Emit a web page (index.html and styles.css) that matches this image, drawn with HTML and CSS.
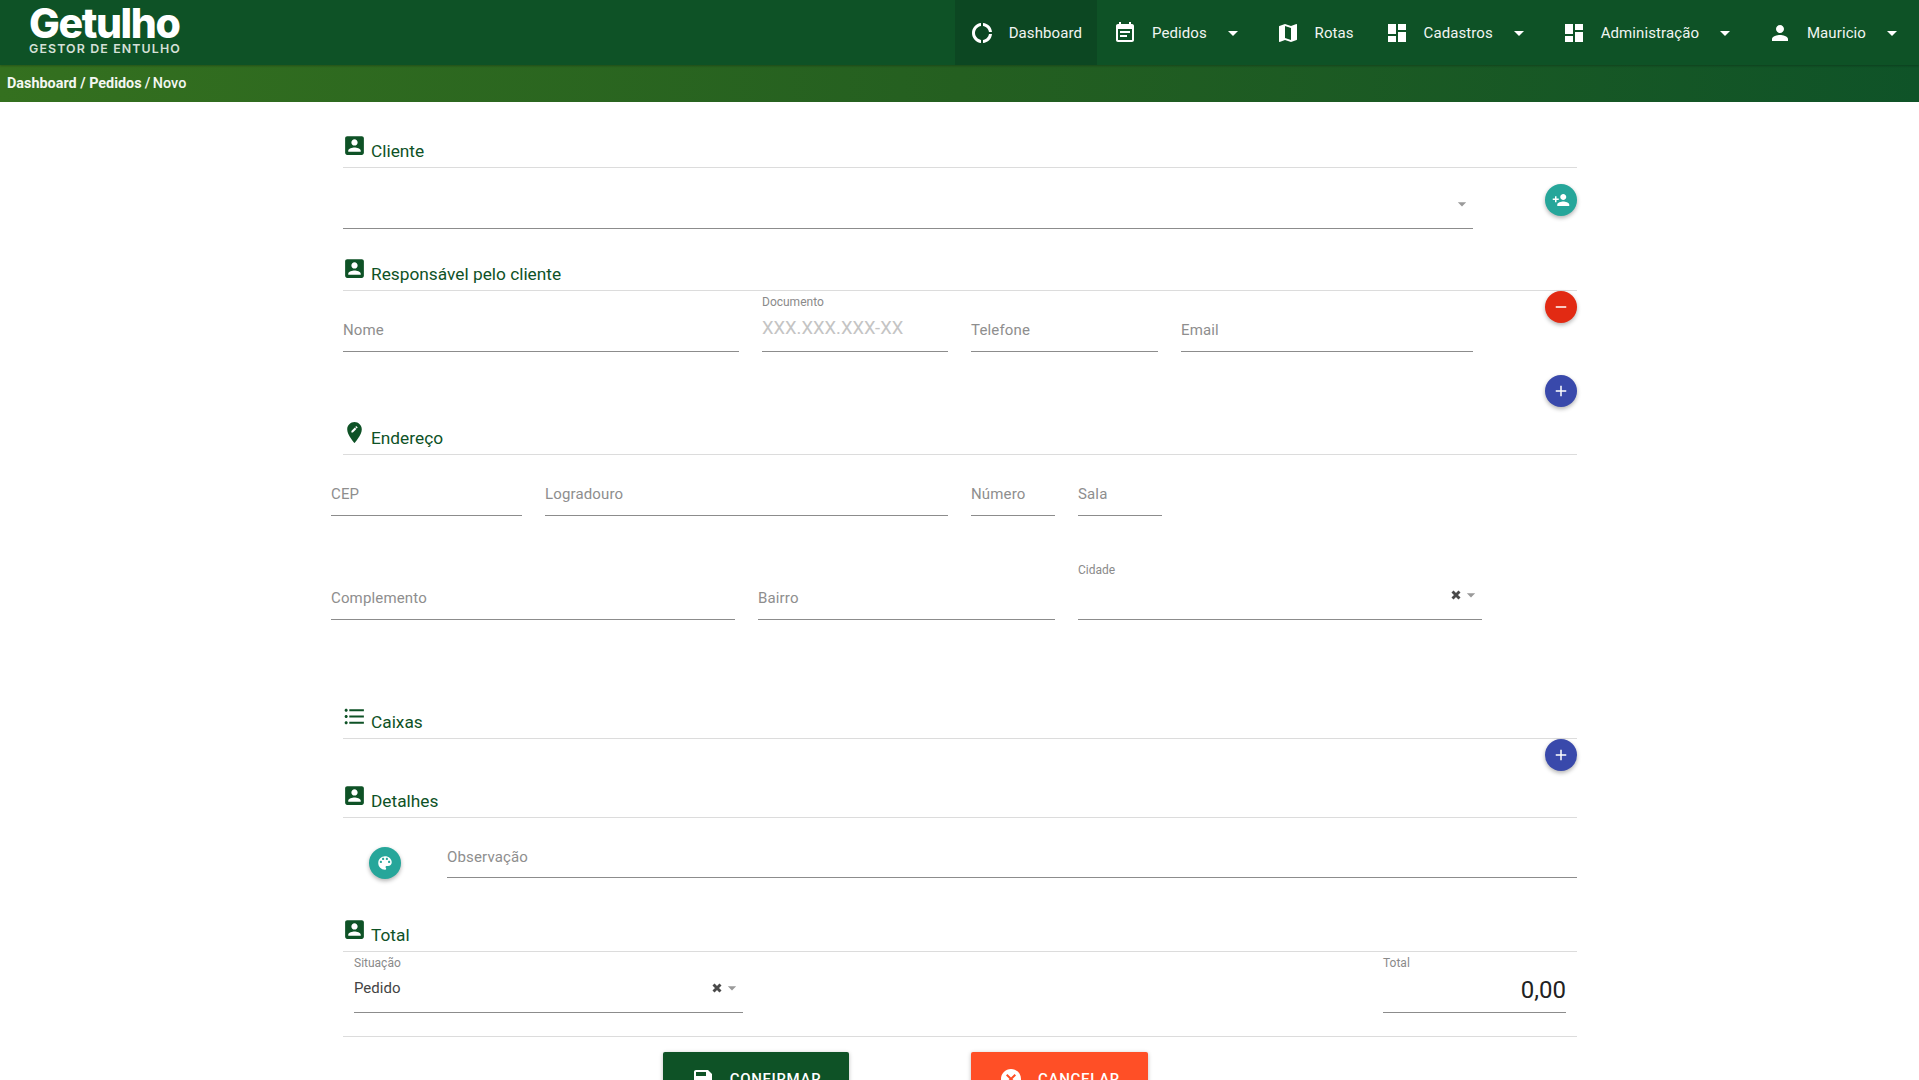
FILE: index.html
```html
<!DOCTYPE html>
<html lang="pt-BR">
<head>
<meta charset="utf-8">
<title>Getulho - Novo pedido</title>
<link rel="stylesheet" href="styles.css">
</head>
<body>
<svg class="defs" aria-hidden="true">
  <symbol id="i-box" viewBox="0 0 24 24"><path d="M3 5v14c0 1.1.89 2 2 2h14c1.1 0 2-.9 2-2V5c0-1.1-.9-2-2-2H5c-1.11 0-2 .9-2 2zm12 4c0 1.66-1.34 3-3 3s-3-1.34-3-3 1.34-3 3-3 3 1.34 3 3zm-9 8c0-2 4-3.1 6-3.1s6 1.1 6 3.1v1H6v-1z"/></symbol>
  <symbol id="i-donut" viewBox="0 0 24 24"><path d="M11 5.08V2c-5 .5-9 4.76-9 10s4 9.5 9 10v-3.08c-3-.48-6-3.49-6-6.92s3-6.44 6-6.92zM18.97 11H22c-.47-5-4-8.53-9-9v3.08C16 5.51 18.54 8 18.97 11zM13 18.92V22c5-.47 8.53-4 9-9h-3.03c-.43 3-2.97 5.49-5.97 5.92z"/></symbol>
  <symbol id="i-event" viewBox="0 0 24 24"><path d="M17 10H7v2h10v-2zm2-7h-1V1h-2v2H8V1H6v2H5c-1.11 0-1.99.9-1.99 2L3 19c0 1.1.89 2 2 2h14c1.1 0 2-.9 2-2V5c0-1.1-.9-2-2-2zm0 16H5V8h14v11zm-5-5H7v2h7v-2z"/></symbol>
  <symbol id="i-map" viewBox="0 0 24 24"><path d="M20.5 3l-.16.03L15 5.1 9 3 3.36 4.9c-.21.07-.36.25-.36.48V20.5c0 .28.22.5.5.5l.16-.03L9 18.9l6 2.1 5.64-1.9c.21-.07.36-.25.36-.48V3.5c0-.28-.22-.5-.5-.5zM15 19l-6-2.11V5l6 2.11V19z"/></symbol>
  <symbol id="i-dash" viewBox="0 0 24 24"><path d="M3 13h8V3H3v10zm0 8h8v-6H3v6zm10 0h8V11h-8v10zm0-18v6h8V3h-8z"/></symbol>
  <symbol id="i-person" viewBox="0 0 24 24"><path d="M12 12c2.21 0 4-1.79 4-4s-1.79-4-4-4-4 1.79-4 4 1.79 4 4 4zm0 2c-2.67 0-8 1.34-8 4v2h16v-2c0-2.66-5.33-4-8-4z"/></symbol>
  <symbol id="i-caret" viewBox="0 0 24 24"><path d="M7 10l5 5 5-5z"/></symbol>
  <symbol id="i-add-person" viewBox="0 0 24 24"><path d="M15 12c2.21 0 4-1.79 4-4s-1.79-4-4-4-4 1.79-4 4 1.79 4 4 4zm-9-2V7H4v3H1v2h3v3h2v-3h3v-2H6zm9 4c-2.67 0-8 1.34-8 4v2h16v-2c0-2.66-5.33-4-8-4z"/></symbol>
  <symbol id="i-minus" viewBox="0 0 24 24"><path d="M19 13H5v-2h14v2z"/></symbol>
  <symbol id="i-plus" viewBox="0 0 24 24"><path d="M19 13h-6v6h-2v-6H5v-2h6V5h2v6h6v2z"/></symbol>
  <symbol id="i-pin" viewBox="0 0 24 24"><path d="M12 2C8.14 2 5 5.14 5 9c0 5.25 7 13 7 13s7-7.75 7-13c0-3.86-3.14-7-7-7zm-1.56 10H9v-1.44l3.35-3.34 1.43 1.43L10.44 12zm4.45-4.45l-.7.7-1.44-1.44.7-.7c.15-.15.39-.15.54 0l.9.9c.15.15.15.39 0 .54z"/></symbol>
  <symbol id="i-list" viewBox="0 0 24 24"><path d="M4 10.5c-.83 0-1.5.67-1.5 1.5s.67 1.5 1.5 1.5 1.5-.67 1.5-1.5-.67-1.5-1.5-1.5zm0-6c-.83 0-1.5.67-1.5 1.5S3.17 7.5 4 7.5 5.5 6.83 5.5 6 4.83 4.5 4 4.5zm0 12c-.83 0-1.5.68-1.5 1.5s.68 1.5 1.5 1.5 1.5-.68 1.5-1.5-.67-1.5-1.5-1.5zM7 19h14v-2H7v2zm0-6h14v-2H7v2zm0-8v2h14V5H7z"/></symbol>
  <symbol id="i-palette" viewBox="0 0 24 24"><path d="M12 3c-4.97 0-9 4.03-9 9s4.03 9 9 9c.83 0 1.5-.67 1.5-1.5 0-.39-.15-.74-.39-1.01-.23-.26-.38-.61-.38-.99 0-.83.67-1.5 1.5-1.5H16c2.76 0 5-2.24 5-5 0-4.42-4.03-8-9-8zm-5.5 9c-.83 0-1.5-.67-1.5-1.5S5.67 9 6.5 9 8 9.67 8 10.5 7.33 12 6.5 12zm3-4C8.67 8 8 7.33 8 6.5S8.67 5 9.5 5s1.5.67 1.5 1.5S10.33 8 9.5 8zm5 0c-.83 0-1.5-.67-1.5-1.5S13.67 5 14.5 5s1.5.67 1.5 1.5S15.33 8 14.5 8zm3 4c-.83 0-1.5-.67-1.5-1.5S16.67 9 17.5 9s1.5.67 1.5 1.5-.67 1.5-1.5 1.5z"/></symbol>
  <symbol id="i-save" viewBox="0 0 24 24"><path d="M17 3H5c-1.11 0-2 .9-2 2v14c0 1.1.89 2 2 2h14c1.1 0 2-.9 2-2V7l-4-4zm-5 16c-1.66 0-3-1.34-3-3s1.34-3 3-3 3 1.34 3 3-1.34 3-3 3zm3-10H5V5h10v4z"/></symbol>
  <symbol id="i-cancel" viewBox="0 0 24 24"><path d="M12 2C6.47 2 2 6.47 2 12s4.47 10 10 10 10-4.47 10-10S17.53 2 12 2zm5 13.59L15.59 17 12 13.41 8.41 17 7 15.59 10.59 12 7 8.41 8.41 7 12 10.59 15.59 7 17 8.41 13.41 12 17 15.59z"/></symbol>
  <symbol id="i-x" viewBox="0 0 24 24"><path d="M6 6l12 12M18 6L6 18" fill="none" stroke="currentColor" stroke-width="5"/></symbol>
</svg>

<header class="topbar">
  <a class="logo" href="#">
    <span class="logo-name">Getulho</span>
    <span class="logo-tag">GESTOR DE ENTULHO</span>
  </a>
  <nav class="nav">
    <a class="nav-item active" href="#"><svg class="ic"><use href="#i-donut"/></svg><span>Dashboard</span></a>
    <a class="nav-item" href="#"><svg class="ic"><use href="#i-event"/></svg><span>Pedidos</span><svg class="ic caret"><use href="#i-caret"/></svg></a>
    <a class="nav-item" href="#"><svg class="ic"><use href="#i-map"/></svg><span>Rotas</span></a>
    <a class="nav-item" href="#"><svg class="ic"><use href="#i-dash"/></svg><span>Cadastros</span><svg class="ic caret"><use href="#i-caret"/></svg></a>
    <a class="nav-item" href="#"><svg class="ic"><use href="#i-dash"/></svg><span>Administração</span><svg class="ic caret"><use href="#i-caret"/></svg></a>
    <a class="nav-item" href="#"><svg class="ic"><use href="#i-person"/></svg><span>Mauricio</span><svg class="ic caret"><use href="#i-caret"/></svg></a>
  </nav>
</header>
<div class="crumbs"><b>Dashboard / Pedidos</b><span>/ Novo</span></div>

<main class="form">
  <h2 class="head"><svg class="head-ic"><use href="#i-box"/></svg><span>Cliente</span></h2>
  <div class="row inset">
    <div class="field w-wide">
      <div class="control"><span class="val"></span><svg class="arrow"><use href="#i-caret"/></svg></div>
    </div>
    <button class="fab teal fab-cliente" type="button"><svg><use href="#i-add-person"/></svg></button>
  </div>

  <h2 class="head mt-18"><svg class="head-ic"><use href="#i-box"/></svg><span>Responsável pelo cliente</span></h2>
  <div class="row inset">
    <div class="field w-396"><div class="control"><span class="val ph">Nome</span></div></div>
    <div class="field w-186"><span class="float">Documento</span><div class="control"><span class="val mask">XXX.XXX.XXX-XX</span></div></div>
    <div class="field w-187"><div class="control"><span class="val ph">Telefone</span></div></div>
    <div class="field w-292"><div class="control"><span class="val ph">Email</span></div></div>
    <button class="fab red fab-top" type="button"><svg><use href="#i-minus"/></svg></button>
  </div>
  <div class="add-row"><button class="fab blue" type="button"><svg><use href="#i-plus"/></svg></button></div>

  <h2 class="head"><svg class="head-ic"><use href="#i-pin"/></svg><span>Endereço</span></h2>
  <div class="row">
    <div class="field w-191"><div class="control"><span class="val ph">CEP</span></div></div>
    <div class="field w-403"><div class="control"><span class="val ph">Logradouro</span></div></div>
    <div class="field w-84"><div class="control"><span class="val ph">Número</span></div></div>
    <div class="field w-84"><div class="control"><span class="val ph">Sala</span></div></div>
  </div>
  <div class="row mt-43">
    <div class="field w-404"><div class="control"><span class="val ph">Complemento</span></div></div>
    <div class="field w-297"><div class="control"><span class="val ph">Bairro</span></div></div>
    <div class="field w-404"><span class="float">Cidade</span><div class="control"><span class="val"></span><svg class="clear"><use href="#i-x"/></svg><svg class="arrow"><use href="#i-caret"/></svg></div></div>
  </div>

  <h2 class="head mt-75"><svg class="head-ic"><use href="#i-list"/></svg><span>Caixas</span></h2>
  <div class="caixas"><button class="fab blue" type="button"><svg><use href="#i-plus"/></svg></button></div>

  <h2 class="head"><svg class="head-ic"><use href="#i-box"/></svg><span>Detalhes</span></h2>
  <div class="obs-row">
    <button class="fab teal fab-palette" type="button"><svg><use href="#i-palette"/></svg></button>
    <div class="field obs"><div class="control"><span class="val ph">Observação</span></div></div>
  </div>

  <h2 class="head mt-30"><svg class="head-ic"><use href="#i-box"/></svg><span>Total</span></h2>
  <div class="total-row">
    <div class="field w-389"><span class="float">Situação</span><div class="control"><span class="val filled">Pedido</span><svg class="clear"><use href="#i-x"/></svg><svg class="arrow"><use href="#i-caret"/></svg></div></div>
    <div class="field w-183"><span class="float">Total</span><div class="control"><span class="val amount">0,00</span></div></div>
  </div>

  <div class="actions">
    <button class="btn btn-ok" type="button"><svg><use href="#i-save"/></svg><span>CONFIRMAR</span></button>
    <button class="btn btn-no" type="button"><svg><use href="#i-cancel"/></svg><span>CANCELAR</span></button>
  </div>
</main>
</body>
</html>
```

FILE: styles.css
```css
* { box-sizing: border-box; }
html, body { margin: 0; height: 100%; overflow: hidden; background: #fff; }
body { font-family: Roboto, "Liberation Sans", sans-serif; color: #222; }
a { color: inherit; text-decoration: none; }
.defs { display: none; }

.topbar {
  height: 65px;
  display: flex;
  align-items: stretch;
  justify-content: space-between;
  background: #0e5226;
  color: #fff;
  box-shadow: 0 1px 2px rgba(0,0,0,.25);
  position: relative;
}
.logo { display: flex; flex-direction: column; margin-left: 29px; width: 154px; }
.logo-name {
  font-family: Inter, sans-serif;
  font-weight: 800;
  font-size: 41px;
  line-height: 36px;
  margin-top: 5px;
  letter-spacing: -1.4px;
}
.logo-tag {
  font-family: Inter, sans-serif;
  font-weight: 600;
  font-size: 12.4px;
  line-height: 12px;
  margin-top: 2px;
  letter-spacing: 1.12px;
  color: #d5e0d8;
  white-space: nowrap;
}
.nav { display: flex; align-items: stretch; gap: .8px; }
.nav-item {
  display: flex;
  align-items: center;
  padding: 0 15px;
  font-size: 15px;
  letter-spacing: .1px;
  color: #f1f5f2;
}
.nav-item.active { background: #0c4722; }
.ic { width: 24px; height: 24px; fill: #fff; margin-right: 15px; flex: none; }
.caret { margin: 0 0 0 14px; }

.crumbs {
  height: 37px;
  padding-left: 7px;
  display: flex;
  align-items: center;
  gap: 3px;
  font-size: 14.4px;
  font-weight: 500;
  color: #f4f7f2;
  background: linear-gradient(to right, #34701f, #245f20 50%, #0f5328);
}
.crumbs b { font-weight: 700; }
.crumbs span { word-spacing: -1px; }

.form { width: 1246px; margin-left: 331px; padding-top: 22px; }
.head {
  margin: 0 0 0 12px;
  height: 44px;
  display: flex;
  align-items: flex-end;
  gap: 4px;
  padding-bottom: 4px;
  border-bottom: 1px solid #dcdcdc;
  font-size: 17.3px;
  font-weight: 400;
  line-height: 24px;
  color: #0e5226;
}
.head-ic { width: 25px; height: 25px; margin: 0 0 5px -1px; fill: #0e5226; flex: none; }
.mt-18 { margin-top: 18px; }
.mt-30 { margin-top: 30px; }
.mt-43 { margin-top: 43px; }
.mt-75 { margin-top: 75px; }

.row { display: flex; gap: 23px; position: relative; }
.inset { padding-left: 12px; }
.field {
  height: 61px;
  flex: none;
  display: flex;
  flex-direction: column;
  border-bottom: 1px solid #8c8c8c;
}
.float { font-size: 12px; line-height: 14px; margin-top: 4px; color: #8a8a8a; }
.control { margin-top: auto; height: 22px; margin-bottom: 12px; display: flex; align-items: center; }
.val { flex: 1; font-size: 15px; line-height: 22px; white-space: nowrap; }
.ph { color: #8e8e8e; letter-spacing: .15px; position: relative; top: 2px; }
.mask { color: #c4c4c4; font-size: 18.4px; }
.filled { color: #444; position: relative; top: -1px; }
.amount { text-align: right; font-size: 24px; color: #222; position: relative; top: 1px; }
.arrow { width: 20px; height: 20px; fill: #9a9a9a; margin: 0 1px 2px 0; flex: none; }
.clear { width: 14px; height: 14px; color: #4a4a4a; margin: 0 -2px 2px 0; flex: none; }

.w-wide { width: 1130px; }
.w-396 { width: 396px; }
.w-186 { width: 186px; }
.w-187 { width: 187px; }
.w-292 { width: 292px; }
.w-191 { width: 191px; }
.w-403 { width: 403px; }
.w-84 { width: 84px; }
.w-404 { width: 404px; }
.w-297 { width: 297px; }
.w-389 { width: 389px; }
.w-183 { width: 183px; }

.fab {
  width: 32px;
  height: 32px;
  padding: 0;
  border: 0;
  border-radius: 50%;
  display: flex;
  align-items: center;
  justify-content: center;
  flex: none;
  box-shadow: 0 2px 4px rgba(0,0,0,.3);
}
.fab svg { width: 18px; height: 18px; fill: #fff; }
.teal { background: #26a69a; }
.red { background: #e22a13; }
.blue { background: #3949ab; }
.fab-cliente { margin: 15.5px 0 0 auto; }
.fab-top { margin: 0 0 0 auto; }
.add-row { height: 59px; padding-top: 23px; display: flex; justify-content: flex-end; }
.caixas { height: 35px; display: flex; justify-content: flex-end; }
.obs-row { display: flex; height: 60px; padding-left: 38px; }
.fab-palette { margin-top: 29px; }
.obs { width: 1130px; height: 60px; margin-left: auto; }
.obs .control { margin-bottom: 11px; }
.obs .ph { top: 2px; }

.total-row {
  margin-left: 12px;
  padding: 0 11px 23px 11px;
  display: flex;
  justify-content: space-between;
  border-bottom: 1px solid #dcdcdc;
}
.actions { display: flex; gap: 122px; margin: 15px 0 0 332px; }
.btn {
  height: 54px;
  border: 0;
  border-radius: 2px;
  padding: 0;
  display: flex;
  align-items: center;
  justify-content: center;
  gap: 15px;
  color: #fff;
  font: 500 15px Roboto, sans-serif;
  letter-spacing: .7px;
  box-shadow: 0 1px 4px rgba(0,0,0,.25);
}
.btn svg { width: 24px; height: 24px; fill: #fff; }
.btn-ok { width: 186px; background: #0e5226; }
.btn-no { width: 177px; background: #ff4f26; }
```
